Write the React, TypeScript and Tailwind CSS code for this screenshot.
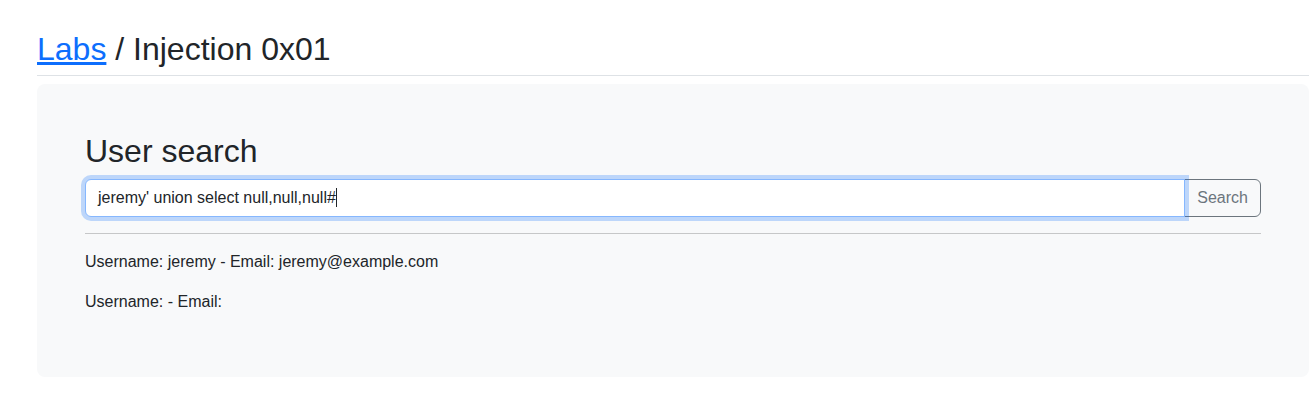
const FONT = "font-['Liberation_Sans',Arial,'Helvetica_Neue',sans-serif]";

const results = [
  { username: 'jeremy', email: 'jeremy@example.com' },
  { username: '', email: '' },
];

export default function App() {
  return (
    <div className={`min-h-[403px] bg-white text-[#212529] ${FONT}`}>
      <div className="ml-[37px] w-[1272px] pt-[30px]">
        <h2 className="border-b border-[#dee2e6] pb-[7px] text-[32px] leading-[1.2] font-normal">
          <a href="#" className="text-[#0d6efd] underline">
            Labs
          </a>{' '}
          / Injection 0x01
        </h2>

        <div className="mt-[8px] rounded-lg bg-[#f8f9fa] px-[48px] pt-[48px] pb-[47px]">
          <h2 className="mb-[8px] text-[32px] leading-[1.2] font-normal">User search</h2>

          <form className="flex" onSubmit={(e) => e.preventDefault()}>
            <div className="relative z-10 flex h-[38px] flex-1 items-center rounded-l-md border border-[#86b7fe] bg-white px-3 text-base leading-6 shadow-[0_0_0_4px_rgba(13,110,253,0.25)]">
              <span className="whitespace-pre">jeremy' union select null,null,null#</span>
              <span className="inline-block h-[19px] w-px bg-[#212529]" />
            </div>
            <button
              type="submit"
              className="-ml-px h-[38px] rounded-r-md border border-[#6c757d] px-3 text-base leading-6 text-[#6c757d]"
            >
              Search
            </button>
          </form>

          <hr className="my-4 border-0 border-t border-[#c6c7c8]" />

          {results.map((r, i) => (
            <p key={i} className="mb-4 text-base leading-6">
              Username: {r.username ? `${r.username} ` : ''}- Email: {r.email}
            </p>
          ))}
        </div>
      </div>
    </div>
  );
}
